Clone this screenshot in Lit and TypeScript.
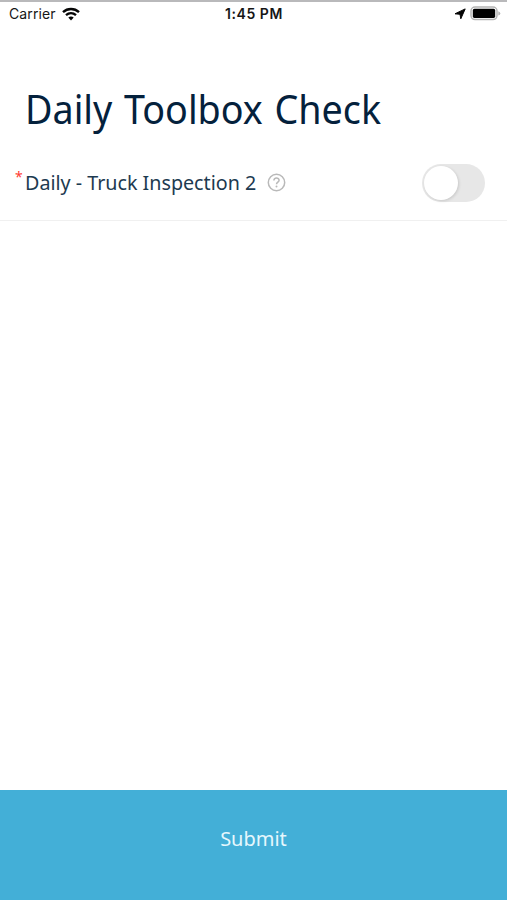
import { LitElement, html, css } from "lit";
import { customElement, state } from "lit/decorators.js";

@customElement("status-bar")
class StatusBar extends LitElement {
  static styles = css`
    :host { display: block; border-top: 2px solid #b9b9bb; height: 24px; box-sizing: border-box;
      font-family: Inter, "Liberation Sans", sans-serif; color: #161616; }
    .bar { display: grid; grid-template-columns: 1fr auto 1fr; align-items: center; height: 23px; padding: 0 6px 0 9px; }
    .left, .right { display: flex; align-items: center; }
    .left { gap: 6px; font-size: 14px; letter-spacing: 0.1px; }
    .time { font-size: 14px; font-weight: 600; letter-spacing: 0.55px; margin: 0 2px 0 0; }
    .right { justify-content: flex-end; gap: 4px; }
    svg { display: block; }
  `;
  render() {
    return html`<div class="bar">
      <div class="left"><span>Carrier</span>
        <svg width="18" height="14" viewBox="0 0 18 14" fill="none" stroke="#050505" stroke-width="2.4">
          <path d="M1 5.1C5.6.9 12.4.9 17 5.1"/><path d="M4 8.2c3-2.6 7-2.6 10 0"/>
          <path d="M6.3 10.6Q9 8.6 11.7 10.6L9 13.4Z" fill="#050505" stroke="none"/>
        </svg>
      </div>
      <span class="time">1:45 PM</span>
      <div class="right">
        <svg width="12" height="12" viewBox="0 0 12 12"><path d="M11.2.9 6.8 10.8 6 6.3 1 5.8Z" fill="#050505" stroke="#050505" stroke-width="1" stroke-linejoin="round"/></svg>
        <svg width="31" height="15" viewBox="0 0 31 15">
          <rect x="1" y="1" width="26" height="12.6" rx="4" fill="#fff" stroke="#b4b4b4" stroke-width="1.5"/>
          <rect x="2.8" y="2.8" width="22.4" height="9.1" rx="1.6" fill="#000"/>
          <path d="M28.3 5.2q2 .8 2 2.2t-2 2.2Z" fill="#b4b4b4"/>
        </svg>
      </div>
    </div>`;
  }
}

@customElement("check-row")
class CheckRow extends LitElement {
  @state() on = false;
  static styles = css`
    :host { display: block; }
    .row { display: flex; align-items: center; height: 76px; box-sizing: border-box; padding: 0 22px 0 15px;
      border-bottom: 1px solid #f0f0f0; }
    .star { width: 10px; color: #ff3b30; font-size: 14px; line-height: 20px; align-self: flex-start; margin-top: 22px; }
    .label { width: 242px; font-size: 20px; line-height: 28px; white-space: nowrap; color: #1d3a50; }
    .label span { display: inline-block; transform: scaleX(0.985); transform-origin: left; }
    .help { display: block; flex: none; }
    .switch { margin-left: auto; width: 63px; height: 38px; border: 0; border-radius: 19px; padding: 2px;
      background: #e7e7e7; display: flex; align-items: center; }
    .switch.on { background: #43afd7; justify-content: flex-end; }
    .knob { width: 34px; height: 34px; border-radius: 50%; background: #fff; box-shadow: 1px 1px 3px #0002; }
  `;
  render() {
    return html`<div class="row">
      <span class="star">*</span>
      <span class="label"><span>Daily - Truck Inspection 2</span></span>
      <svg class="help" width="19" height="19" viewBox="0 0 19 19" fill="none" stroke="#b9b9b9" stroke-width="1.5">
        <circle cx="9.5" cy="9.5" r="8.2"/>
        <path d="M6.9 7.6C6.9 4.1 12.1 4.2 12.1 7.3 12.1 9.2 9.5 9.1 9.5 11.3"/>
        <circle cx="9.5" cy="13.5" r="1" fill="#b9b9b9" stroke="none"/>
      </svg>
      <button class="switch ${this.on ? "on" : ""}" role="switch" aria-label="Daily - Truck Inspection 2"
        aria-checked=${this.on ? "true" : "false"} @click=${() => (this.on = !this.on)}><span class="knob"></span></button>
    </div>`;
  }
}

@customElement("app-root")
class AppRoot extends LitElement {
  static styles = css`
    :host { display: flex; flex-direction: column; height: 900px; background: #fff; font-family: "Noto Sans", sans-serif; }
    h1 { margin: 57px 0 0 25px; height: 64px; line-height: 56px; font-size: 40px; font-weight: 400; color: #04213c; white-space: nowrap; }
    h1 span { display: inline-block; transform: scaleX(0.942); transform-origin: left; word-spacing: 2px; }
    main { flex: 1; }
    .submit { height: 110px; border: 0; padding: 0 0 12px; background: #43afd7; color: #e6f7fd;
      font: 400 20px/28px "Noto Sans", sans-serif; }
    .submit span { display: inline-block; }
  `;
  render() {
    return html`<status-bar></status-bar>
      <main><h1><span>Daily Toolbox Check</span></h1><check-row></check-row></main>
      <button class="submit"><span>Submit</span></button>`;
  }
}
